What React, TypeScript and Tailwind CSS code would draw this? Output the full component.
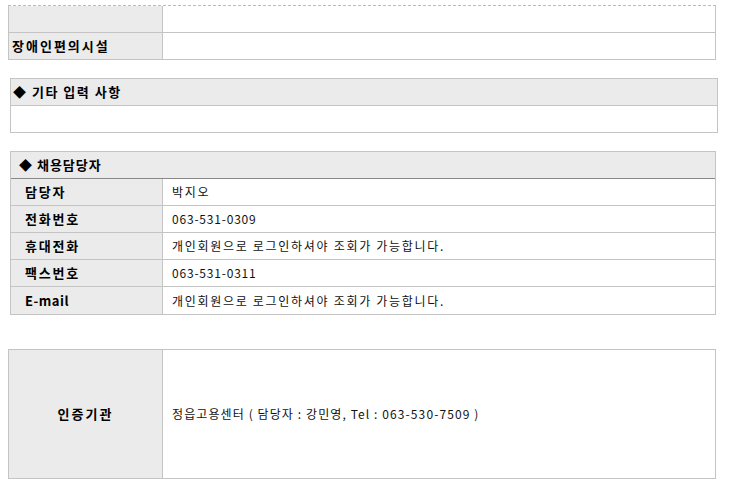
import React from "react";

const F = { fontFamily: '"Noto Sans CJK KR", "Noto Sans", sans-serif' };

function InfoRow({
  label,
  value,
  last,
  labelCls = "tracking-[1.8px]",
  valueCls = "tracking-[1.7px]",
}: {
  label: string;
  value: string;
  last?: boolean;
  labelCls?: string;
  valueCls?: string;
}) {
  return (
    <div className={`flex h-[27px] box-border ${last ? "" : "border-b border-[#c4c4c4]"}`}>
      <div className={`w-[152px] shrink-0 bg-[#ebebeb] border-r border-[#c4c4c4] flex items-center pl-[14px] text-[13px] font-bold text-black ${labelCls}`}>
        {label}
      </div>
      <div className={`flex-1 flex items-center pl-[9px] text-[12px] text-[#111] ${valueCls}`}>{value}</div>
    </div>
  );
}

export default function App() {
  return (
    <div className="w-[730px] h-[486px] bg-white overflow-hidden text-black" style={F}>
      {/* top table */}
      <div className="ml-[8px] mt-[5px] w-[708px] border border-[#c4c4c4] [border-top-style:dashed] border-t-[#bbbbbb]">
        <div className="flex h-[27px] box-border border-b border-[#c4c4c4]">
          <div className="w-[154px] shrink-0 bg-[#ebebeb] border-r border-[#c4c4c4]" />
          <div className="flex-1" />
        </div>
        <div className="flex h-[26px]">
          <div className="w-[154px] shrink-0 bg-[#ebebeb] border-r border-[#c4c4c4] flex items-center pl-[3px] text-[13px] font-bold tracking-[2px]">
            장애인편의시설
          </div>
          <div className="flex-1" />
        </div>
      </div>

      {/* 기타 입력 사항 */}
      <div className="ml-[10px] mt-[18px] w-[708px] border border-[#c4c4c4]">
        <div className="h-[27px] box-border border-b border-[#c4c4c4] bg-[#ebebeb] flex items-center pl-[2px] text-[13px] font-bold tracking-[1.5px]">
          ◆ 기타 입력 사항
        </div>
        <div className="h-[26px]" />
      </div>

      {/* 채용담당자 */}
      <div className="ml-[10px] mt-[18px] w-[706px] border border-[#c4c4c4]">
        <div className="h-[27px] box-border border-b border-[#888888] bg-[#ebebeb] flex items-center pl-[8px] text-[13px] font-bold tracking-[1px]">
          ◆ 채용담당자
        </div>
        <InfoRow label="담당자" value="박지오" />
        <InfoRow label="전화번호" value="063-531-0309" valueCls="tracking-[0.8px]" />
        <InfoRow label="휴대전화" value="개인회원으로 로그인하셔야 조회가 가능합니다." />
        <InfoRow label="팩스번호" value="063-531-0311" valueCls="tracking-[0.8px]" />
        <InfoRow label="E-mail" value="개인회원으로 로그인하셔야 조회가 가능합니다." labelCls="tracking-[0.5px]" last />
      </div>

      {/* 인증기관 */}
      <div className="ml-[8px] mt-[34px] w-[708px] h-[130px] box-border border border-[#c4c4c4] flex">
        <div className="w-[154px] shrink-0 bg-[#ebebeb] border-r border-[#c4c4c4] flex items-center justify-center text-[13px] font-bold tracking-[2px]">
          인증기관
        </div>
        <div className="flex-1 flex items-center pl-[9px] text-[12px] text-[#111] tracking-[1.1px]">
          정읍고용센터 ( 담당자 : 강민영, Tel : 063-530-7509 )
        </div>
      </div>
    </div>
  );
}
